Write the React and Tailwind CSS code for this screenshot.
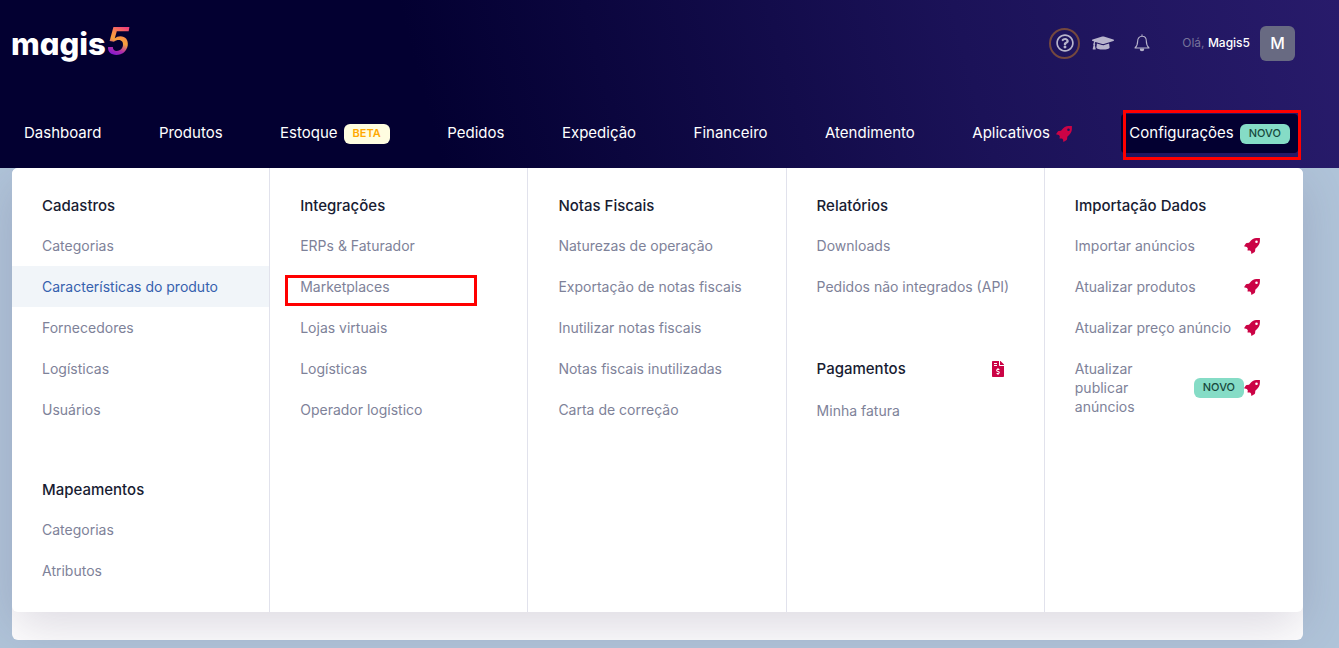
import React from "react";
import {
  FaGraduationCap,
  FaFileInvoiceDollar,
  FaRegQuestionCircle,
} from "react-icons/fa";

const navItems = [
  { label: "Dashboard" },
  { label: "Produtos" },
  { label: "Estoque", badge: "BETA" },
  { label: "Pedidos" },
  { label: "Expedição" },
  { label: "Financeiro" },
  { label: "Atendimento" },
  { label: "Aplicativos", rocket: true },
  { label: "Configurações", badge: "NOVO", active: true },
];

const columns = [
  [
    {
      title: "Cadastros",
      items: [
        { label: "Categorias" },
        { label: "Características do produto", hover: true },
        { label: "Fornecedores" },
        { label: "Logísticas" },
        { label: "Usuários" },
      ],
    },
    {
      title: "Mapeamentos",
      items: [{ label: "Categorias" }, { label: "Atributos" }],
    },
  ],
  [
    {
      title: "Integrações",
      items: [
        { label: "ERPs & Faturador" },
        { label: "Marketplaces", marked: true },
        { label: "Lojas virtuais" },
        { label: "Logísticas" },
        { label: "Operador logístico" },
      ],
    },
  ],
  [
    {
      title: "Notas Fiscais",
      items: [
        { label: "Naturezas de operação" },
        { label: "Exportação de notas fiscais" },
        { label: "Inutilizar notas fiscais" },
        { label: "Notas fiscais inutilizadas" },
        { label: "Carta de correção" },
      ],
    },
  ],
  [
    {
      title: "Relatórios",
      items: [
        { label: "Downloads" },
        { label: "Pedidos não integrados (API)" },
      ],
    },
    {
      title: "Pagamentos",
      invoice: true,
      items: [{ label: "Minha fatura" }],
    },
  ],
  [
    {
      title: "Importação Dados",
      items: [
        { label: "Importar anúncios", rocket: true },
        { label: "Atualizar produtos", rocket: true },
        { label: "Atualizar preço anúncio", rocket: true },
        { label: "Atualizar publicar anúncios", rocket: true, badge: "NOVO" },
      ],
    },
  ],
];

const Badge = ({ text }) => (
  <span
    className={`inline-flex h-5 shrink-0 items-center rounded-md px-[9px] text-[11px] ${
      text === "BETA"
        ? "bg-[#fffde0] font-semibold text-[#ffa800]"
        : "bg-[#85dcc6] font-medium text-[#17493d]"
    }`}
  >
    {text}
  </span>
);

const RocketIcon = () => (
  <svg viewBox="0 0 16 16" className="size-4 shrink-0 text-[#cb0345]" fill="currentColor">
    <path
      fillRule="evenodd"
      d="M15.900.1H12.200C10 .2 8.500.9 7 2.600L5 4.800 2.800 5C2.200 5.100 1.800 5.400 1.500 5.900L0 8.300 2.800 9 3.800 10.200 3.500 12.500 6 12.600 7 13.500 7.400 16 9.900 14.600C10.500 14.200 11 13.700 11.100 13L11.300 10.700 13.300 8.700C15.200 6.800 15.900 5 15.900 2.800ZM12.500 2.400a1.300 1.300 0 1 1 0 2.600 1.300 1.300 0 0 1 0-2.600Z"
    />
  </svg>
);

const BellIcon = () => (
  <svg
    viewBox="0 0 16 18"
    className="h-[18px] w-4"
    fill="none"
    stroke="currentColor"
    strokeWidth="1.1"
    strokeLinecap="round"
    strokeLinejoin="round"
  >
    <path d="M8 .8v1.400M8 2.200c-2.600 0-4.300 2-4.300 4.600 0 3.600-.7 5.400-2.700 7.200h14c-2-1.800-2.700-3.600-2.700-7.200C12.300 4.200 10.600 2.200 8 2.200z" />
    <path d="M6.300 15h3.400c0 1-.7 1.800-1.700 1.800S6.300 16 6.300 15z" fill="currentColor" />
  </svg>
);

const Header = () => (
  <header className="relative bg-[linear-gradient(75deg,#030031_0%,#030031_32%,#1b1258_72%,#281b6b_100%)] text-white">
    <div className="flex h-[86px] items-center justify-between pr-11 pl-[11px]">
      <a href="#" className="flex items-baseline pb-1 leading-none">
        <span className="text-[31px] font-extrabold [font-feature-settings:'cv11','ss01']">
          magis
        </span>
        <span className="bg-[linear-gradient(205deg,#f0407a_15%,#f98b4a_35%,#f7a23c_50%,#b02ea8_68%,#7d14dc_85%)] bg-clip-text text-[38px] font-semibold text-transparent italic">
          5
        </span>
      </a>
      <div className="flex items-center text-[#b8b5cc]">
        <button
          aria-label="Ajuda"
          className="flex size-[31px] items-center justify-center rounded-full border-2 border-[#74483f]"
        >
          <FaRegQuestionCircle size={18} />
        </button>
        <button aria-label="Academia" className="ml-3">
          <FaGraduationCap size={22} />
        </button>
        <button aria-label="Notificações" className="ml-5">
          <BellIcon />
        </button>
        <span className="ml-8 text-xs text-[#77739a]">
          Olá, <span className="font-medium text-white">Magis5</span>
        </span>
        <button className="ml-[10px] size-[35px] rounded-md bg-[#686a82] text-base font-medium text-white">
          M
        </button>
      </div>
    </div>
    <nav className="flex h-[82px] items-start justify-between pt-7 pr-[41px] pl-4 text-[15px]">
      {navItems.map((item) => (
        <a
          key={item.label}
          href="#"
          className={`relative flex h-[39px] items-center gap-[6px] rounded-sm px-2 ${
            item.active ? "bg-[#030031]" : ""
          }`}
        >
          {item.label}
          {item.badge && <Badge text={item.badge} />}
          {item.rocket && <RocketIcon />}
          {item.active && (
            <span className="absolute -top-1 -right-[3px] left-[2px] h-[50px] border-3 border-[#f00]" />
          )}
        </a>
      ))}
    </nav>
  </header>
);

const MenuItem = ({ item }) => (
  <a
    href="#"
    className={`relative flex items-center py-[11px] pl-[30px] text-[14px] leading-[19px] ${
      item.rocket ? "pr-[43px]" : "pr-4"
    } ${item.hover ? "bg-[#f1f5f9] text-[#3661ae]" : "text-[#7e8299]"}`}
  >
    <span className={item.badge ? "w-20" : "whitespace-nowrap"}>
      {item.label}
    </span>
    <span className="ml-auto flex items-center">
      {item.badge && <Badge text={item.badge} />}
      {item.rocket && <RocketIcon />}
    </span>
    {item.marked && (
      <span className="absolute top-[9px] right-[50px] left-[15px] h-[31px] border-3 border-[#f00]" />
    )}
  </a>
);

const MegaMenu = () => (
  <div className="grid grid-cols-5 rounded-md bg-white shadow-[0_15px_50px_0_rgba(82,63,105,0.2)]">
    {columns.map((groups, index) => (
      <div
        key={index}
        className="space-y-10 border-r border-[#e1e2ec] pt-[18px] pb-[21px] last:border-r-0"
      >
        {groups.map((group) => (
          <section key={group.title}>
            <h3
              className={`flex items-center justify-between pr-[38px] pl-[30px] text-[15px] leading-[19px] font-medium text-[#181c32] ${
                group.invoice ? "py-3" : "py-[10px]"
              }`}
            >
              {group.title}
              {group.invoice && (
                <FaFileInvoiceDollar size={16} className="text-[#cb0345]" />
              )}
            </h3>
            {group.items.map((item) => (
              <MenuItem key={item.label} item={item} />
            ))}
          </section>
        ))}
      </div>
    ))}
  </div>
);

const App = () => (
  <div className="min-h-screen bg-[#b0c4d9] font-['Inter',sans-serif]">
    <Header />
    <main className="mr-9 ml-3 rounded-md bg-white pb-7">
      <MegaMenu />
    </main>
  </div>
);

export default App;
